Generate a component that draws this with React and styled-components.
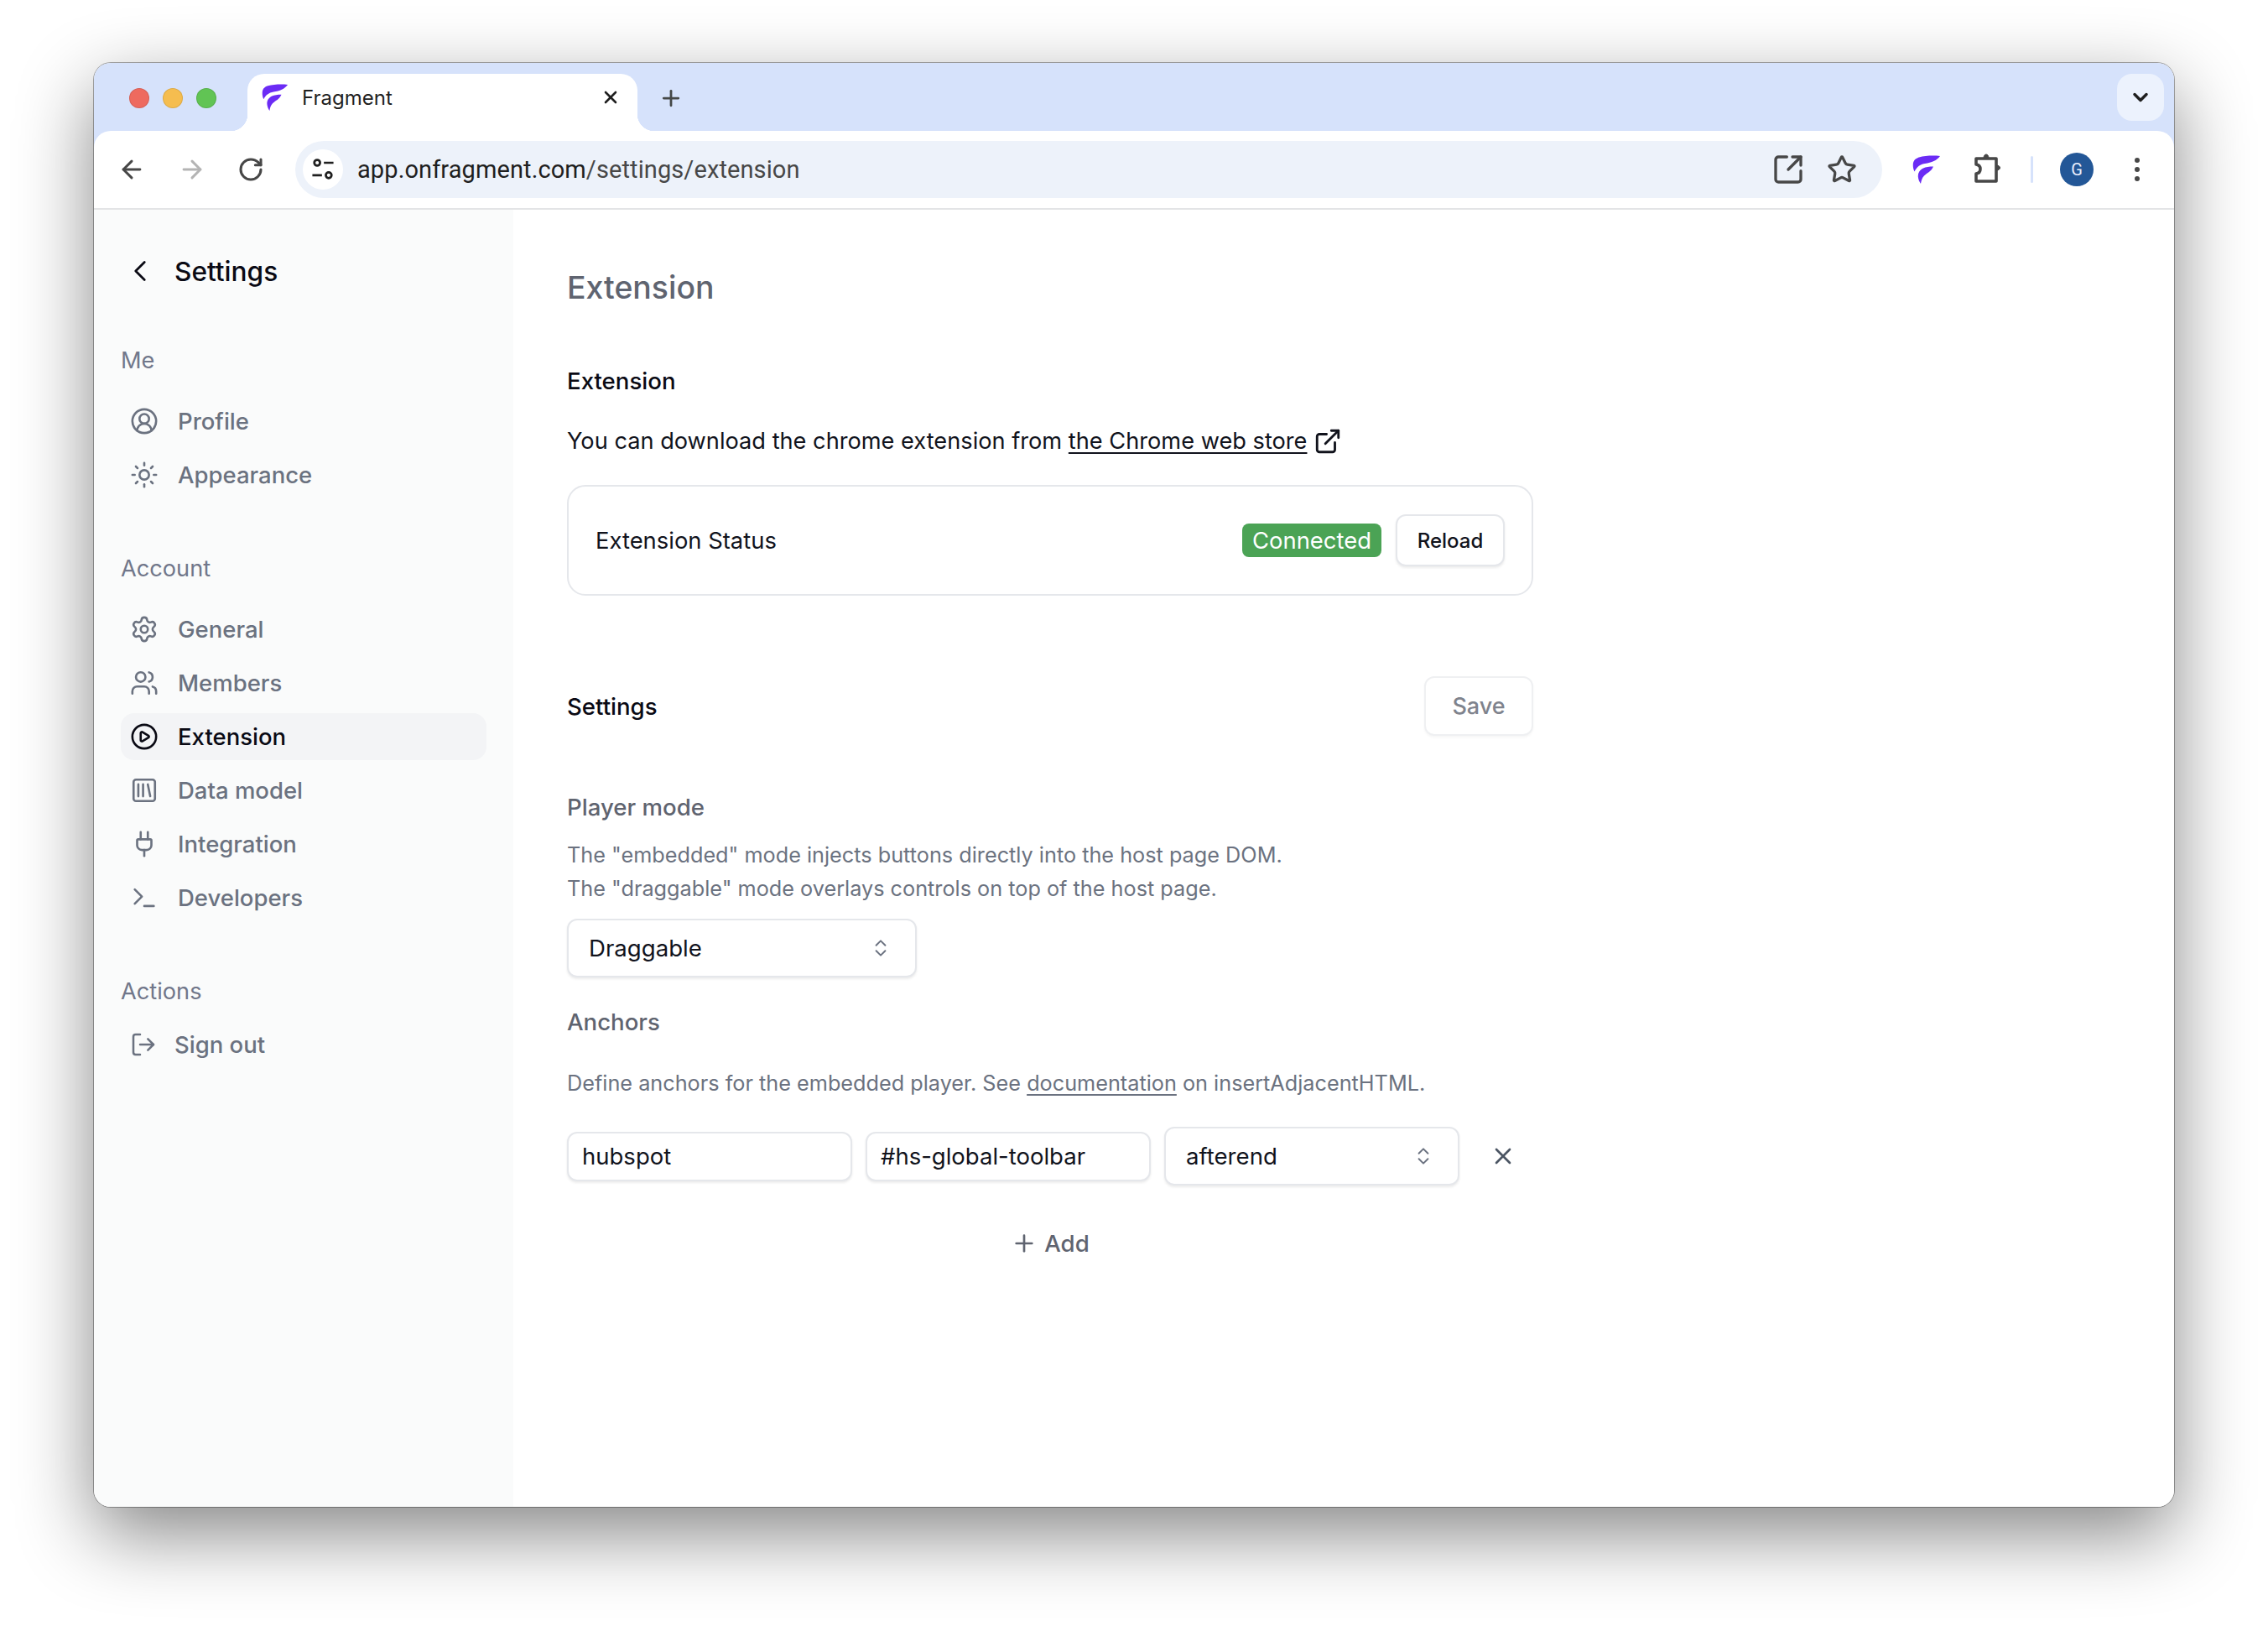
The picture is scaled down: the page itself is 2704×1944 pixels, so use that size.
import React from 'react'
import styled, {createGlobalStyle} from 'styled-components'
import {
  ArrowLeft, ArrowRight, RotateCw, Star, SquareArrowOutUpRight, ChevronDown, ChevronLeft, ChevronsUpDown,
  CircleUserRound, Sun, Settings, Users, CirclePlay, SquareLibrary, Plug, Terminal, LogOut, ExternalLink, X, Plus
} from 'lucide-react'

const Global=createGlobalStyle`
  html,body{margin:0;padding:0;background:#fff;}
  body{font-family:Inter,"Liberation Sans",sans-serif;}
  *{box-sizing:border-box;}
`

const Page=styled.div`
  width:2704px;
  height:1944px;
  padding:75px 112px 0;
`

const Window=styled.div`
  width:2480px;
  height:1721px;
  border-radius:20px;
  overflow:hidden;
  background:#fff;
  box-shadow:0 0 0 1px rgba(0,0,0,.32),0 32px 90px rgba(0,0,0,.48);
  display:flex;
  flex-direction:column;
`

const TabStrip=styled.div`
  height:81px;
  flex:none;
  background:#d6e2fb;
  display:flex;
  align-items:flex-end;
  padding-left:33px;
  padding-right:12px;
`

const Lights=styled.div`
  display:flex;
  gap:16px;
  align-self:flex-start;
  margin-top:30px;
  margin-left:9px;
`

const Light=styled.span`
  width:24px;
  height:24px;
  border-radius:50%;
  background:${p=>p.color};
  box-shadow:inset 0 0 0 1px rgba(0,0,0,.1);
`

const Tab=styled.div`
  position:relative;
  width:465px;
  height:68px;
  margin-left:37px;
  background:#fff;
  border-radius:20px 20px 0 0;
  display:flex;
  align-items:center;
  padding:0 20px 12px 17px;
  color:#1f1f1f;
  font-size:24px;
  &::before,&::after{
    content:'';
    position:absolute;
    bottom:0;
    width:20px;
    height:20px;
  }
  &::before{
    left:-20px;
    background:radial-gradient(circle at 0 0,#d6e2fb 20px,#fff 20.5px);
  }
  &::after{
    right:-20px;
    background:radial-gradient(circle at 100% 0,#d6e2fb 20px,#fff 20.5px);
  }
`

const TabTitle=styled.span`
  flex:1;
  margin-left:16px;
`

const NewTab=styled.div`
  display:flex;
  align-self:center;
  margin-left:25px;
  margin-top:2px;
  color:#444746;
`

const TabsMenu=styled.div`
  margin-left:auto;
  align-self:flex-start;
  margin-top:13px;
  width:56px;
  height:56px;
  border-radius:18px;
  background:#ecf2fd;
  display:flex;
  align-items:center;
  justify-content:center;
  color:#1f1f1f;
`

const ToolbarWrap=styled.div`
  background:#d6e2fb;
  flex:none;
`

const Toolbar=styled.div`
  height:92px;
  background:#fff;
  border-radius:20px 20px 0 0;
  display:flex;
  align-items:center;
  color:#474747;
  padding-left:28px;
`

const ToolIcons=styled.div`
  display:flex;
  align-items:center;
  gap:37.5px;
  width:212px;
  flex:none;
`

const Omnibox=styled.div`
  width:1892px;
  height:68px;
  flex:none;
  border-radius:34px;
  background:#edf2fa;
  display:flex;
  align-items:center;
  padding-left:9px;
  padding-right:30px;
`

const SiteButton=styled.div`
  width:48px;
  height:48px;
  border-radius:50%;
  background:#fff;
  display:flex;
  align-items:center;
  justify-content:center;
  color:#1f1f1f;
  flex:none;
`

const Url=styled.div`
  margin-left:17px;
  flex:1;
  font-family:Roboto,Inter,sans-serif;
  font-size:29px;
  letter-spacing:.1px;
  color:#474747;
  b{font-weight:400;color:#1f1f1f;}
`

const OmniIcons=styled.div`
  display:flex;
  gap:26px;
  align-items:center;
`

const ToolRight=styled.div`
  display:flex;
  align-items:center;
  flex:1;
  padding-left:36px;
`

const LogoMark=styled.svg`
  flex:none;
`

const PuzzleMark=styled.svg`
  flex:none;
  margin-left:38px;
`

const Divider=styled.span`
  width:3px;
  height:32px;
  border-radius:2px;
  background:#d6e2fb;
  margin-left:33px;
`

const Avatar=styled.span`
  width:40px;
  height:40px;
  margin-left:32px;
  border-radius:50%;
  background:#235797;
  color:#e8eefc;
  font-family:Roboto,sans-serif;
  font-size:20px;
  display:flex;
  align-items:center;
  justify-content:center;
`

const Dots=styled.span`
  margin-left:49px;
  display:flex;
  flex-direction:column;
  gap:5px;
  span{
    width:6px;
    height:6px;
    border-radius:50%;
    background:#474747;
  }
`

const Body=styled.div`
  flex:1;
  display:flex;
  min-height:0;
  border-top:2px solid #e3e4e6;
`

const Sidebar=styled.aside`
  width:500px;
  flex:none;
  background:#fafbfb;
  padding:45px 32px 0 32px;
`

const BackRow=styled.div`
  height:56px;
  display:flex;
  align-items:center;
  padding-left:2px;
  gap:20px;
  color:#0a0a14;
  font-size:31.6px;
  font-weight:500;
  margin-bottom:59px;
`

const Group=styled.div`
  margin-bottom:64px;
`

const GroupLabel=styled.div`
  height:40px;
  line-height:40px;
  font-size:27.2px;
  color:#71778a;
  margin-bottom:${p=>p.$gap||24}px;
`

const NavList=styled.div`
  display:flex;
  flex-direction:column;
  gap:8px;
`

const NavItem=styled.div`
  height:56px;
  border-radius:16px;
  display:flex;
  align-items:center;
  padding-left:11px;
  gap:${p=>p.$gap||23}px;
  font-size:27.5px;
  font-weight:500;
  color:${p=>p.$active?'#0a0a14':'#6b7280'};
  background:${p=>p.$active?'#f3f4f6':'transparent'};
`

const Main=styled.main`
  flex:1;
  padding:65px 0 0 64px;
  background:#fff;
`

const Column=styled.div`
  width:1152px;
`

const Title=styled.h1`
  margin:0 0 63px;
  font-size:37.4px;
  line-height:56px;
  font-weight:500;
  color:#5f6470;
`

const SubHead=styled.h2`
  margin:0;
  font-size:27.6px;
  line-height:40px;
  font-weight:500;
  color:#0a0a14;
`

const Para=styled.p`
  margin:30px 0 30px;
  font-size:27.2px;
  line-height:44px;
  color:#11131c;
  display:flex;
  align-items:center;
  gap:8px;
  a{color:inherit;text-decoration:underline;text-underline-offset:4px;}
  span{white-space:pre;}
`

const Card=styled.div`
  height:132px;
  border:2px solid #e5e7eb;
  border-radius:22px;
  display:flex;
  align-items:center;
  padding:0 32px;
  font-size:27.4px;
  color:#11131c;
`

const Spacer=styled.div`
  flex:1;
`

const Badge=styled.span`
  height:40px;
  width:166px;
  border-radius:8px;
  background:#4ba355;
  color:#fff;
  font-size:27.4px;
  line-height:40px;
  text-align:center;
  margin-right:17px;
`

const Button=styled.button`
  height:${p=>p.$h}px;
  width:${p=>p.$w}px;
  background:#fff;
  border:2px solid ${p=>p.$muted?'#eff0f2':'#e5e7eb'};
  border-radius:12px;
  box-shadow:0 2px 3px rgba(0,0,0,${p=>p.$muted?.04:.08});
  font-family:inherit;
  font-size:${p=>p.$size}px;
  font-weight:500;
  color:${p=>p.$muted?'#7f838d':'#11131c'};
  padding:0;
`

const SectionRow=styled.div`
  margin-top:96px;
  display:flex;
  align-items:center;
  justify-content:space-between;
`

const FieldLabel=styled.div`
  font-size:27.6px;
  line-height:40px;
  font-weight:500;
  color:#5f6470;
  margin-top:${p=>p.$top}px;
`

const Help=styled.div`
  font-size:25.25px;
  line-height:40px;
  color:#6b7280;
  margin-top:${p=>p.$top||0}px;
  a{color:inherit;text-decoration:underline;text-underline-offset:4px;}
`

const SelectBox=styled.div`
  width:${p=>p.$w}px;
  height:70px;
  flex:none;
  margin-top:${p=>p.$top||0}px;
  border:2px solid #e5e7eb;
  border-radius:12px;
  background:#fff;
  box-shadow:0 2px 3px rgba(0,0,0,.08);
  display:flex;
  align-items:center;
  justify-content:space-between;
  padding:0 28px 0 24px;
  font-size:27.6px;
  color:#11131c;
  svg{color:#6b7280;}
`

const AnchorRow=styled.div`
  margin-top:32px;
  display:flex;
  align-items:center;
  gap:16px;
`

const TextField=styled.input`
  width:340px;
  height:59px;
  flex:none;
  border:2px solid #e5e7eb;
  border-radius:12px;
  background:#fff;
  box-shadow:0 2px 3px rgba(0,0,0,.08);
  padding:0 16px;
  font-family:inherit;
  font-size:27.5px;
  color:#11131c;
  outline:none;
`

const RemoveIcon=styled.span`
  display:flex;
  margin-left:20px;
  color:#4b5563;
`

const AddRow=styled.div`
  margin-top:49px;
  height:40px;
  display:flex;
  align-items:center;
  justify-content:center;
  gap:8px;
  font-size:27.6px;
  font-weight:500;
  color:#5f6470;
`

const Logo=({size})=>
<LogoMark width={size} height={size} viewBox="0 0 34 34">
  <path fill="#6b2bf5" d="M33 1C25 0 15 .5 8 2.500 3 4 1 7 .8 11c-.2 3 .5 6 1.700 8.500C5 14 9 11 15 10c8-1.200 14-3.500 18-9z"/>
  <path fill="#6b2bf5" d="M25 13.500c-5 0-9 .5-12 2-4 2-6.500 5.500-6.200 10 .2 3 1.400 6 3.200 8.500.5-3.500 1.500-7 4-9.500 4-3.800 8-4.500 11-11z"/>
</LogoMark>

const SiteIcon=()=>
<svg width="32" height="32" viewBox="0 0 28 28" fill="none" stroke="currentColor" strokeWidth="2.4">
  <circle cx="8" cy="7" r="3"/>
  <path d="M15 7h10M3 20h10"/>
  <circle cx="20" cy="20" r="3"/>
</svg>

const Puzzle=()=>
<PuzzleMark width="36" height="40" viewBox="0 0 36 40" fill="none" stroke="#474747" strokeWidth="3.600" strokeLinejoin="round">
  <path d="M4 7h24v27H4v-9c4-.5 5-3 5-5.500S8 14.500 4 14z"/>
  <path d="M13 6.500c0-6 6-6 6 0zM28 15c6 0 6 6 0 6z" fill="#474747" strokeWidth="1"/>
</PuzzleMark>

const navIcon={size:34,strokeWidth:1.85}

const App=()=>
<Page>
  <Global/>
  <Window>
    <TabStrip>
      <Lights>
        <Light color="#ee6a5f"/>
        <Light color="#f5bd4f"/>
        <Light color="#61c454"/>
      </Lights>
      <Tab>
        <Logo size={32}/>
        <TabTitle>Fragment</TabTitle>
        <X size={24} strokeWidth={2.6}/>
      </Tab>
      <NewTab><Plus size={30} strokeWidth={2.2}/></NewTab>
      <TabsMenu><ChevronDown size={28} strokeWidth={3}/></TabsMenu>
    </TabStrip>
    <ToolbarWrap>
      <Toolbar>
        <ToolIcons>
          <ArrowLeft size={34} strokeWidth={2.1}/>
          <ArrowRight size={34} strokeWidth={2.1} color="#b4b4b4"/>
          <RotateCw size={32} strokeWidth={2.3}/>
        </ToolIcons>
        <Omnibox>
          <SiteButton><SiteIcon/></SiteButton>
          <Url><b>app.onfragment.com</b>/settings/extension</Url>
          <OmniIcons>
            <SquareArrowOutUpRight size={40} strokeWidth={2}/>
            <Star size={36} strokeWidth={2.2}/>
          </OmniIcons>
        </Omnibox>
        <ToolRight>
          <Logo size={34}/>
          <Puzzle/>
          <Divider/>
          <Avatar>G</Avatar>
          <Dots><span/><span/><span/></Dots>
        </ToolRight>
      </Toolbar>
    </ToolbarWrap>
    <Body>
      <Sidebar>
        <BackRow>
          <ChevronLeft size={42} strokeWidth={1.6}/>
          Settings
        </BackRow>
        <Group>
          <GroupLabel>Me</GroupLabel>
          <NavList>
            <NavItem><CircleUserRound {...navIcon}/>Profile</NavItem>
            <NavItem><Sun {...navIcon}/>Appearance</NavItem>
          </NavList>
        </Group>
        <Group>
          <GroupLabel>Account</GroupLabel>
          <NavList>
            <NavItem><Settings {...navIcon}/>General</NavItem>
            <NavItem><Users {...navIcon}/>Members</NavItem>
            <NavItem $active><CirclePlay {...navIcon}/>Extension</NavItem>
            <NavItem><SquareLibrary {...navIcon}/>Data model</NavItem>
            <NavItem><Plug {...navIcon}/>Integration</NavItem>
            <NavItem><Terminal {...navIcon}/>Developers</NavItem>
          </NavList>
        </Group>
        <Group>
          <GroupLabel $gap={15}>Actions</GroupLabel>
          <NavItem $gap={21}><LogOut size={32} strokeWidth={1.9}/>Sign out</NavItem>
        </Group>
      </Sidebar>
      <Main>
        <Column>
          <Title>Extension</Title>
          <SubHead>Extension</SubHead>
          <Para>
            <span>You can download the chrome extension from <a href="#store">the Chrome web store</a></span>
            <ExternalLink size={34} strokeWidth={2}/>
          </Para>
          <Card>
            Extension Status
            <Spacer/>
            <Badge>Connected</Badge>
            <Button $w={130} $h={62} $size={24}>Reload</Button>
          </Card>
          <SectionRow>
            <SubHead>Settings</SubHead>
            <Button $w={130} $h={71} $size={27} $muted>Save</Button>
          </SectionRow>
          <FieldLabel $top={65}>Player mode</FieldLabel>
          <Help $top={17}>The "embedded" mode injects buttons directly into the host page DOM.</Help>
          <Help>The "draggable" mode overlays controls on top of the host page.</Help>
          <SelectBox $w={417} $top={16}>
            Draggable
            <ChevronsUpDown size={26} strokeWidth={1.8}/>
          </SelectBox>
          <FieldLabel $top={33}>Anchors</FieldLabel>
          <Help $top={33}>Define anchors for the embedded player. See <a href="#docs">documentation</a> on insertAdjacentHTML.</Help>
          <AnchorRow>
            <TextField defaultValue="hubspot"/>
            <TextField defaultValue="#hs-global-toolbar"/>
            <SelectBox $w={352}>
              afterend
              <ChevronsUpDown size={26} strokeWidth={1.8}/>
            </SelectBox>
            <RemoveIcon><X size={32} strokeWidth={2}/></RemoveIcon>
          </AnchorRow>
          <AddRow>
            <Plus size={32} strokeWidth={2}/>
            Add
          </AddRow>
        </Column>
      </Main>
    </Body>
  </Window>
</Page>

export default App
